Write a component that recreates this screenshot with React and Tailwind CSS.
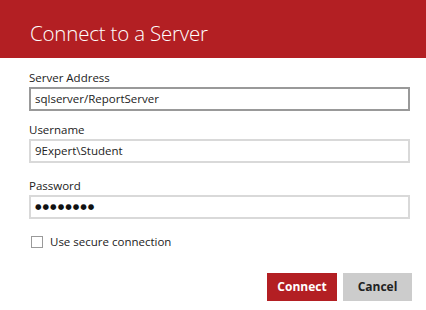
import React from "react";

function Field({ label, value, focused, className }) {
  return (
    <div className={className}>
      <div className="text-[11.5px] leading-[15px] text-[#222]">{label}</div>
      <div
        className={
          "mt-[2px] h-[24px] border-2 px-[4px] flex items-center text-[11.5px] text-[#222] bg-white " +
          (focused ? "border-[#999999]" : "border-[#d9d9d9]")
        }
      >
        {value}
      </div>
    </div>
  );
}

export default function App() {
  return (
    <div
      className="w-[426px] h-[310px] bg-white overflow-hidden"
      style={{ fontFamily: '"Open Sans", "Noto Sans", sans-serif' }}
    >
      <div className="h-[58px] bg-[#b31f23] flex items-center pl-[30px] pt-[9px]">
        <h1 className="text-[20.5px] font-light text-white leading-none tracking-[-0.2px]">
          Connect to a Server
        </h1>
      </div>

      <div className="pl-[29px] pr-[16px] pt-[12px]">
        <Field label="Server Address" value="sqlserver/ReportServer" focused />
        <Field label="Username" value="9Expert\Student" className="mt-[11px]" />
        <Field
          label="Password"
          className="mt-[15px]"
          value={
            <span
              className="text-[7.5px] tracking-[1px] text-[#111]"
              style={{ fontFamily: '"DejaVu Sans", sans-serif' }}
            >
              ●●●●●●●●
            </span>
          }
        />

        <div className="mt-[15px] flex items-center gap-[7px] pl-[2px] h-[15px]">
          <div className="w-[12px] h-[12px] border border-[#9a9a9a] bg-white" />
          <span className="text-[11.5px] text-[#222]">Use secure connection</span>
        </div>

        <div className="mt-[24px] flex justify-end gap-[6px]">
          <button className="w-[70px] h-[28px] bg-[#b31f23] text-white text-[12px] font-bold">
            Connect
          </button>
          <button className="w-[69px] h-[28px] bg-[#cccccc] text-[#222] text-[12px] font-bold mr-[-2px]">
            Cancel
          </button>
        </div>
      </div>
    </div>
  );
}
